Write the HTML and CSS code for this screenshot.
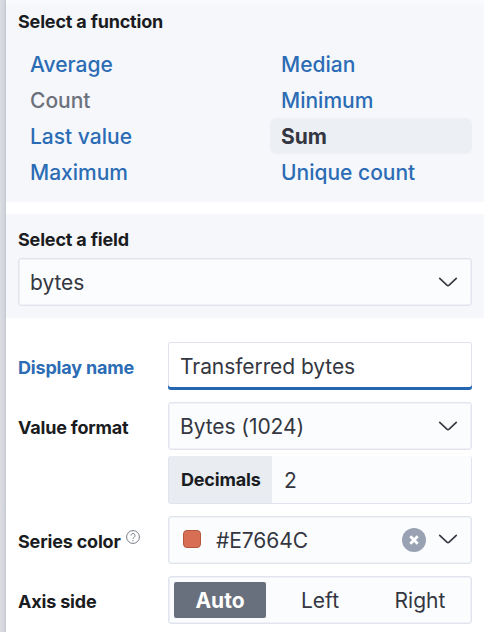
FILE: index.html
```html
<!DOCTYPE html>
<html lang="en">
<head>
<meta charset="utf-8">
<title>Dimension editor</title>
<link rel="stylesheet" href="styles.css">
</head>
<body>
<main class="flyout">
  <section class="section functions">
    <h2 class="label title">Select a function</h2>
    <div class="function-grid">
      <ul class="function-list">
        <li class="fn">Average</li>
        <li class="fn disabled">Count</li>
        <li class="fn">Last value</li>
        <li class="fn">Maximum</li>
      </ul>
      <ul class="function-list">
        <li class="fn">Median</li>
        <li class="fn">Minimum</li>
        <li class="fn selected">Sum</li>
        <li class="fn">Unique count</li>
      </ul>
    </div>
  </section>
  <section class="section field">
    <h2 class="label title">Select a field</h2>
    <div class="control">
      <span class="value">bytes</span>
      <svg class="chevron" viewBox="0 0 24 24"><path d="M3.7 8.3l7.2 6.9q1.1 1 2.2 0l7.2-6.9"/></svg>
    </div>
  </section>
  <section class="form">
    <div class="row">
      <div class="label active">Display name</div>
      <div class="control focused"><span class="value">Transferred bytes</span></div>
    </div>
    <div class="row">
      <div class="label">Value format</div>
      <div class="control">
        <span class="value">Bytes (1024)</span>
        <svg class="chevron" viewBox="0 0 24 24"><path d="M3.7 8.3l7.2 6.9q1.1 1 2.2 0l7.2-6.9"/></svg>
      </div>
    </div>
    <div class="row compact">
      <div class="label"></div>
      <div class="control group">
        <span class="label prepend">Decimals</span>
        <span class="value">2</span>
      </div>
    </div>
    <div class="row">
      <div class="label">Series color
        <svg class="help" viewBox="0 0 16 16"><circle cx="8" cy="8" r="6.4"/><path d="M6 6.5a2 2 0 1 1 3.2 1.6Q8 8.8 8 9.8"/><path d="M8 11v1.2"/></svg>
      </div>
      <div class="control">
        <span class="swatch"></span>
        <span class="value">#E7664C</span>
        <svg class="clear" viewBox="0 0 24 24"><circle cx="12" cy="12" r="12"/><path d="M8.3 8.3l7.4 7.4M15.7 8.3l-7.4 7.4"/></svg>
        <svg class="chevron raised" viewBox="0 0 24 24"><path d="M3.7 8.3l7.2 6.9q1.1 1 2.2 0l7.2-6.9"/></svg>
      </div>
    </div>
    <div class="row">
      <div class="label">Axis side</div>
      <div class="control buttons">
        <span class="button on">Auto</span>
        <span class="button">Left</span>
        <span class="button">Right</span>
      </div>
    </div>
  </section>
</main>
</body>
</html>
```

FILE: styles.css
```css
* { box-sizing: border-box; }
body {
  margin: 0;
  width: 484px;
  height: 632px;
  overflow: hidden;
  background: #fff;
  color: #343741;
  font: 400 21px/36px Inter, sans-serif;
}
.flyout {
  height: 632px;
  padding-left: 6px;
  background: linear-gradient(to right, #dcdee4, #d3d5dc 4px, #c5c7cf 6px, #fff 6px);
}
.section {
  padding: 0 12px 12px;
  background: #f5f7fb;
}
.functions {
  height: 202px;
  background: linear-gradient(#fafbfd, #f9fafc 4px, #f5f7fb 6px);
}
.field {
  height: 104px;
  margin-top: 12px;
}
.label {
  color: #1a1c21;
  font-size: 18px;
  font-weight: 650;
  line-height: 24px;
  letter-spacing: -0.18px;
  white-space: nowrap;
}
.title { margin: 0; }
.functions .title { padding: 10px 0 12px; }
.field .title { padding: 14px 0 6px; }
.function-grid {
  display: grid;
  grid-template-columns: 202px 202px;
  gap: 50px;
}
.function-list {
  margin: 0;
  padding: 0;
  list-style: none;
}
.fn {
  height: 36px;
  padding-left: 11px;
  border-radius: 6px;
  color: #2b6cb4;
  font-weight: 500;
  line-height: 38px;
}
.function-list:first-child .fn { padding-left: 12px; }
.fn.disabled { color: #6c717c; }
.fn.selected {
  background: #eceff4;
  color: #343741;
  font-weight: 700;
}
.control {
  display: flex;
  align-items: center;
  width: 100%;
  height: 48px;
  padding: 0 11px;
  border: 1px solid #e1e4ed;
  border-radius: 3px;
  background: #fbfcfe;
  box-shadow: inset 0 0 0 1px #eff1f7;
}
.value {
  flex: 1;
  padding-top: 2px;
  letter-spacing: -0.07px;
  white-space: nowrap;
}
.chevron {
  width: 24px;
  height: 24px;
  fill: none;
  stroke: #343741;
  stroke-width: 1.6;
  stroke-linecap: round;
}
.raised { margin-bottom: 2px; }
.form {
  display: flex;
  flex-direction: column;
  gap: 12px;
  padding: 24px 12px 0;
}
.row {
  display: grid;
  grid-template-columns: 150px 304px;
  align-items: center;
}
.row > .label { padding-top: 3px; }
.compact { margin-top: -6px; }
.active { color: #2b6cb4; }
.focused {
  padding: 0 12px 1px;
  border: 0;
  background: #fff;
  box-shadow: inset 0 -3px #2467b0, inset 0 0 0 1px #e1e4ed;
}
.group {
  padding-left: 0;
  border-top: 0;
  box-shadow: none;
}
.prepend {
  align-self: stretch;
  width: 103px;
  margin-right: 12px;
  padding-left: 12px;
  background: #e9edf2;
  line-height: 48px;
}
.help {
  width: 16px;
  height: 16px;
  vertical-align: 3px;
  fill: none;
  stroke: #777c88;
  stroke-width: 1;
}
.swatch {
  width: 18px;
  height: 18px;
  margin: 0 15px 3px 3px;
  border: 1px solid #b45740;
  border-radius: 4px;
  background: #d86f54;
}
.clear {
  width: 24px;
  height: 24px;
  margin-right: 10px;
  fill: #98a2b3;
}
.clear path {
  stroke: #fff;
  stroke-width: 2.8;
}
.buttons { padding: 0 1px 0 5px; }
.button {
  flex: 0 0 100px;
  height: 36px;
  line-height: 38px;
  text-align: center;
}
.button.on {
  flex-basis: 92px;
  margin-right: 4px;
  border-radius: 2px;
  background: #69707d;
  color: #fff;
  font-weight: 700;
}
```
